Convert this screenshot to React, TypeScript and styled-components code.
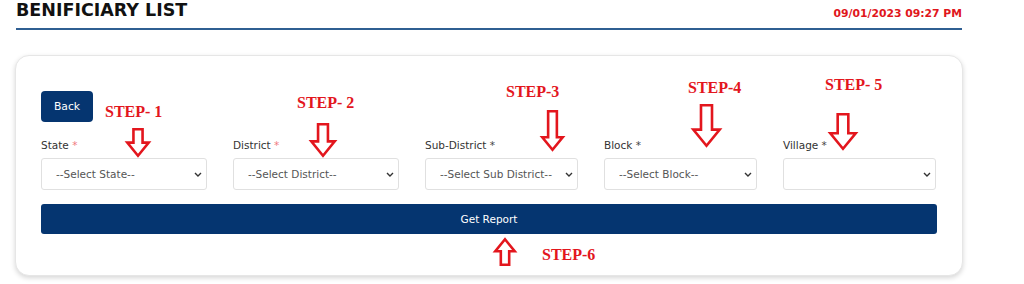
import React from "react";
import styled, { createGlobalStyle } from "styled-components";

const Global = createGlobalStyle`
  html, body { margin: 0; padding: 0; background: #ffffff; }
  body { font-family: "DejaVu Sans", Verdana, sans-serif; color: #333; }
  * { box-sizing: border-box; }
`;

const Page = styled.div`
  position: relative;
  width: 1024px;
  height: 284px;
  overflow: hidden;
  padding-top: 1px;
`;

const Header = styled.header`
  margin-left: 16px;
  width: 946px;
  height: 29px;
  display: flex;
  justify-content: space-between;
  align-items: flex-start;
  border-bottom: 2px solid #2f5f92;
`;

const Title = styled.h1`
  margin: 0;
  font-family: "DejaVu Sans", Verdana, sans-serif;
  font-weight: 700;
  font-size: 17.5px;
  line-height: 19px;
  color: #111;
`;

const DateText = styled.div`
  margin-top: 6px;
  font-family: "DejaVu Sans", Verdana, sans-serif;
  font-weight: 700;
  font-size: 10.8px;
  line-height: 13px;
  color: #e0161c;
`;

const Card = styled.section`
  margin: 25px 0 0 15px;
  width: 948px;
  border: 1px solid #e6e6e6;
  border-radius: 14px;
  box-shadow: 0 2px 5px rgba(0, 0, 0, 0.16);
  padding: 35px 25px 41px 25px;
  background: #fff;
`;

const BackButton = styled.button`
  display: block;
  width: 52px;
  height: 31px;
  border: none;
  border-radius: 4px;
  background: #053570;
  color: #fff;
  font-family: "DejaVu Sans", Verdana, sans-serif;
  font-size: 10.8px;
  padding: 0;
`;

const FieldsRow = styled.div`
  margin-top: 17px;
  display: grid;
  grid-template-columns: 166px 166px 153px 153px 153px;
  column-gap: 26px;
`;

const Field = styled.div`
  display: flex;
  flex-direction: column;
  gap: 6px;
`;

const Label = styled.label`
  font-size: 10.5px;
  line-height: 13px;
  color: #333;
  white-space: nowrap;
`;

const Star = styled.span<{ $required?: boolean }>`
  color: ${(p) => (p.$required ? "#f07a80" : "#444")};
`;

const SelectWrap = styled.div`
  position: relative;
  height: 32px;
`;

const Select = styled.select`
  appearance: none;
  -webkit-appearance: none;
  width: 100%;
  height: 32px;
  border: 1px solid #e0e0e0;
  border-radius: 3px;
  background: #fff;
  padding: 0 20px 0 14px;
  font-family: "DejaVu Sans", Verdana, sans-serif;
  font-size: 10.5px;
  color: #555;
  outline: none;
`;

const Chevron = styled.svg`
  position: absolute;
  right: 5px;
  top: 14px;
  width: 8px;
  height: 5px;
  pointer-events: none;
`;

const ReportButton = styled.button`
  margin-top: 14px;
  width: 100%;
  height: 30px;
  border: none;
  border-radius: 3px;
  background: #053570;
  color: #fff;
  font-family: "DejaVu Sans", Verdana, sans-serif;
  font-size: 10.5px;
  padding: 0;
`;

const StepText = styled.div<{ $x: number; $y: number }>`
  position: absolute;
  left: ${(p) => p.$x}px;
  top: ${(p) => p.$y}px;
  font-family: "Liberation Serif", "Times New Roman", serif;
  font-weight: 700;
  font-size: 16px;
  line-height: 16px;
  color: #e3161d;
  white-space: pre;
`;

const ArrowSvg = styled.svg<{ $x: number; $y: number }>`
  position: absolute;
  left: ${(p) => p.$x}px;
  top: ${(p) => p.$y}px;
  overflow: visible;
`;

type ArrowProps = { x: number; y: number; w: number; h: number; up?: boolean };

const Arrow = ({ x, y, w, h, up }: ArrowProps) => {
  const i = 1.3;
  const cx = w / 2;
  const sw = w * 0.19;
  const hh = w * 0.6;
  const pts = [
    [cx - sw, i],
    [cx + sw, i],
    [cx + sw, h - hh],
    [w - i, h - hh],
    [cx, h - i],
    [i, h - hh],
    [cx - sw, h - hh],
  ]
    .map(([a, b]) => `${a},${up ? h - b : b}`)
    .join(" ");
  return (
    <ArrowSvg $x={x} $y={y} width={w} height={h} viewBox={`0 0 ${w} ${h}`}>
      <polygon points={pts} fill="#fff" stroke="#e3161d" strokeWidth={2.6} strokeLinejoin="miter" />
    </ArrowSvg>
  );
};

const fields = [
  { label: "State", required: true, placeholder: "--Select State--" },
  { label: "District", required: true, placeholder: "--Select District--" },
  { label: "Sub-District", required: false, placeholder: "--Select Sub District--" },
  { label: "Block", required: false, placeholder: "--Select Block--" },
  { label: "Village", required: false, placeholder: "" },
];

const steps = [
  { t: "STEP- 1", x: 105, y: 104 },
  { t: "STEP- 2", x: 297, y: 95 },
  { t: "STEP-3", x: 506, y: 84 },
  { t: "STEP-4", x: 688, y: 80 },
  { t: "STEP- 5", x: 825, y: 77 },
  { t: "STEP-6", x: 542, y: 247 },
];

const arrows: ArrowProps[] = [
  { x: 126, y: 128, w: 24, h: 29 },
  { x: 310, y: 123, w: 26, h: 34 },
  { x: 541, y: 110, w: 23, h: 41 },
  { x: 692, y: 104, w: 29, h: 43 },
  { x: 829, y: 113, w: 28, h: 37 },
  { x: 494, y: 238, w: 22, h: 28, up: true },
];

export default function App() {
  return (
    <Page>
      <Global />
      <Header>
        <Title>BENIFICIARY LIST</Title>
        <DateText>09/01/2023 09:27 PM</DateText>
      </Header>
      <Card>
        <BackButton>Back</BackButton>
        <FieldsRow>
          {fields.map((f) => (
            <Field key={f.label}>
              <Label>
                {f.label} <Star $required={f.required}>*</Star>
              </Label>
              <SelectWrap>
                <Select defaultValue="">
                  <option value="">{f.placeholder}</option>
                </Select>
                <Chevron viewBox="0 0 8 5">
                  <polyline points="1,1 4,4 7,1" fill="none" stroke="#333" strokeWidth={1.4} />
                </Chevron>
              </SelectWrap>
            </Field>
          ))}
        </FieldsRow>
        <ReportButton>Get Report</ReportButton>
      </Card>
      {steps.map((s) => (
        <StepText key={s.t} $x={s.x} $y={s.y}>
          {s.t}
        </StepText>
      ))}
      {arrows.map((a, k) => (
        <Arrow key={k} {...a} />
      ))}
    </Page>
  );
}
